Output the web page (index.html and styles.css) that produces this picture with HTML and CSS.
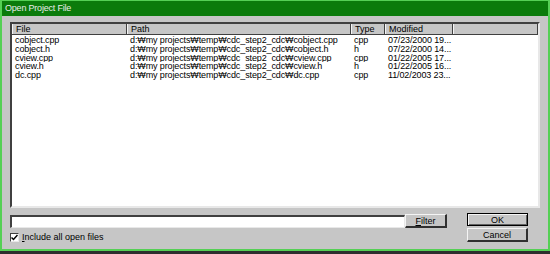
FILE: index.html
```html
<!DOCTYPE html>
<html lang="en">
<head>
    <meta charset="UTF-8">
    <title>Open Project File</title>
    <link rel="stylesheet" href="styles.css">
</head>
<body>
    <div class="window">
        <div class="titlebar">Open Project File</div>
        <div class="content">
            <div class="listview">
                <div class="header">
                    <div class="hcell col-file">File</div>
                    <div class="hcell col-path">Path</div>
                    <div class="hcell col-type">Type</div>
                    <div class="hcell col-mod">Modified</div>
                    <div class="hcell col-fill"></div>
                </div>
                <div class="rows">
                    <div class="row">
                        <span class="col-file">cobject.cpp</span>
                        <span class="col-path">d:₩my projects₩temp₩cdc_step2_cdc₩cobject.cpp</span>
                        <span class="col-type">cpp</span>
                        <span class="col-mod">07/23/2000 19...</span>
                    </div>
                    <div class="row">
                        <span class="col-file">cobject.h</span>
                        <span class="col-path">d:₩my projects₩temp₩cdc_step2_cdc₩cobject.h</span>
                        <span class="col-type">h</span>
                        <span class="col-mod">07/22/2000 14...</span>
                    </div>
                    <div class="row">
                        <span class="col-file">cview.cpp</span>
                        <span class="col-path">d:₩my projects₩temp₩cdc_step2_cdc₩cview.cpp</span>
                        <span class="col-type">cpp</span>
                        <span class="col-mod">01/22/2005 17...</span>
                    </div>
                    <div class="row">
                        <span class="col-file">cview.h</span>
                        <span class="col-path">d:₩my projects₩temp₩cdc_step2_cdc₩cview.h</span>
                        <span class="col-type">h</span>
                        <span class="col-mod">01/22/2005 16...</span>
                    </div>
                    <div class="row">
                        <span class="col-file">dc.cpp</span>
                        <span class="col-path">d:₩my projects₩temp₩cdc_step2_cdc₩dc.cpp</span>
                        <span class="col-type">cpp</span>
                        <span class="col-mod">11/02/2003 23...</span>
                    </div>
                </div>
            </div>

            <div class="bottom">
                <div class="left">
                    <div class="filter-row">
                        <div class="textbox"></div>
                        <button class="btn btn-filter"><u>F</u>ilter</button>
                    </div>
                    <label class="check-row">
                        <span class="check">
                            <svg width="7" height="7" viewBox="0 0 7 7"><path d="M0.5 3.5 L2.5 5.5 L6.5 1" fill="none" stroke="#000" stroke-width="1.5"/></svg>
                        </span>
                        <span><u>I</u>nclude all open files</span>
                    </label>
                </div>
                <div class="right">
                    <button class="btn btn-default">OK</button>
                    <button class="btn btn-cancel">Cancel</button>
                </div>
            </div>
        </div>
    </div>
</body>
</html>
```

FILE: styles.css
```css
body {
    margin: 0;
    background: #2e2e2e;
    font-family: 'Liberation Sans', Arial, sans-serif;
    font-size: 9px;
    color: #000;
}

.window {
    width: 550px;
    height: 251px;
    box-sizing: border-box;
    border: 2px solid #55d055;
    border-top: 1px solid #55d055;
    background: #c6c6c6;
    display: flex;
    flex-direction: column;
}

.titlebar {
    height: 15px;
    line-height: 14px;
    background: #0b7b0b;
    color: #e8ece8;
    padding-left: 3px;
    font-size: 9px;
    letter-spacing: -0.2px;
}

.content {
    padding: 6px 8px 0 8px;
}

.listview {
    height: 186px;
    box-sizing: border-box;
    background: #fff;
    border-top: 2px solid #404040;
    border-left: 2px solid #404040;
    border-right: 2px solid #e8e8e8;
    border-bottom: 2px solid #e8e8e8;
}

.header {
    display: flex;
    height: 10px;
    background: #c6c6c6;
    border-bottom: 1px solid #404040;
}

.hcell {
    box-sizing: border-box;
    height: 10px;
    line-height: 10px;
    padding-left: 3px;
    border-left: 1px solid #f4f4f4;
    border-right: 1px solid #404040;
}

.col-file { width: 115px; }
.col-path { width: 224px; }
.col-type { width: 34px; }
.col-mod { width: 68px; }
.col-fill { flex: 1; }

.rows {
    padding-top: 1px;
}

.row {
    display: flex;
    height: 8.75px;
    line-height: 8.75px;
    white-space: nowrap;
    letter-spacing: -0.12px;
}

.row span {
    display: block;
    box-sizing: border-box;
    padding-left: 3px;
    overflow: hidden;
}

.bottom {
    display: flex;
    margin-top: 5px;
}

.left {
    width: 437px;
}

.filter-row {
    display: flex;
    align-items: flex-start;
}

.textbox {
    width: 395px;
    height: 13px;
    margin-top: 2px;
    box-sizing: border-box;
    background: #fff;
    border-top: 2px solid #404040;
    border-left: 2px solid #404040;
    border-right: 1px solid #e8e8e8;
    border-bottom: 1px solid #e8e8e8;
}

.btn {
    font-family: 'Liberation Sans', Arial, sans-serif;
    font-size: 9px;
    color: #000;
    background: #c6c6c6;
    padding: 0;
    box-sizing: border-box;
    border-top: 1px solid #f4f4f4;
    border-left: 1px solid #f4f4f4;
    border-right: 2px solid #303030;
    border-bottom: 2px solid #303030;
}

.btn-filter {
    width: 42px;
    height: 14px;
    margin-top: 1px;
}

.check-row {
    display: flex;
    align-items: center;
    gap: 3px;
    margin-top: 4px;
    height: 10px;
}

.check {
    width: 9px;
    height: 9px;
    box-sizing: border-box;
    background: #fff;
    border-top: 1px solid #404040;
    border-left: 1px solid #404040;
    border-right: 1px solid #e8e8e8;
    border-bottom: 1px solid #e8e8e8;
    display: flex;
    align-items: center;
    justify-content: center;
}

.check svg {
    display: block;
}

.right {
    margin-left: 20px;
    width: 61px;
    display: flex;
    flex-direction: column;
    gap: 2px;
}

.btn-default {
    height: 13px;
    border: 1px solid #000;
    box-shadow: inset 1px 1px 0 #f4f4f4, inset -1px -1px 0 #606060;
    line-height: 10px;
}

.btn-cancel {
    height: 14px;
}
```
